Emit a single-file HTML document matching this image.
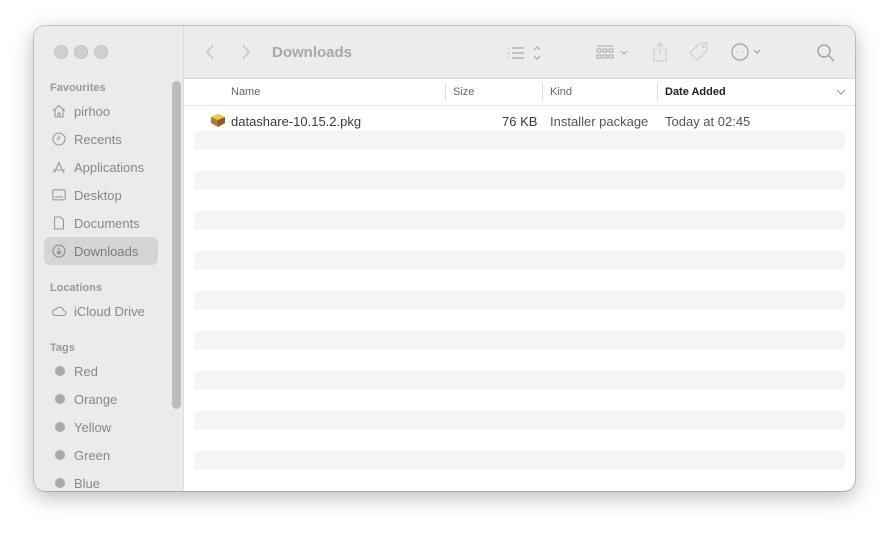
<!DOCTYPE html><html><head><style>
body{margin:0;width:889px;height:533px;background:#fff;font-family:"Liberation Sans",sans-serif;overflow:hidden;position:relative}
.win{position:absolute;left:34px;top:26px;width:821px;height:465px;border-radius:11px;background:#fff;overflow:hidden;box-shadow:0 6px 22px rgba(0,0,0,.28),0 0 0 1px rgba(0,0,0,.18)}
.side{position:absolute;left:0;top:0;width:149px;height:465px;background:#ebebeb;border-right:1px solid #dcdcdc}
.tb{position:absolute;left:150px;top:0;right:0;height:52px;background:#ececec;border-bottom:1px solid #d8d8d8}
.dot{position:absolute;top:19px;width:12px;height:12px;border-radius:50%;background:#cfcfcf;border:0.5px solid #c2c2c2}
.s{position:absolute;left:40px;font-size:13px;color:#888}
.h{position:absolute;left:16px;font-size:11px;font-weight:bold;color:#9a9a9a}
.ic{position:absolute;left:18px;width:14px;height:14px;color:#999}
.tag{position:absolute;left:21px;width:10px;height:10px;border-radius:50%;background:#a9a9a9}
.hd{position:absolute;top:52px;left:150px;right:0;height:27px;border-bottom:1px solid #e3e3e3;font-size:11px;color:#666}
.hd span{position:absolute;top:8px}
.sep{position:absolute;top:4px;width:1px;height:19px;background:#e0e0e0}
.st{position:absolute;left:160px;width:651px;height:19px;border-radius:4px;background:#f4f5f5}
.r{position:absolute;top:88px;font-size:13px;color:#3a3a3a}
</style></head><body><div class="win">
<div class="side">
<div class="dot" style="left:20px"></div><div class="dot" style="left:40px"></div><div class="dot" style="left:60px"></div>
<div style="position:absolute;left:138px;top:55px;width:9px;height:328px;border-radius:5px;background:#bcbcbc"></div>
<div class="h" style="top:56px">Favourites</div>
<div style="position:absolute;left:10px;top:211px;width:114px;height:28px;border-radius:6px;background:#d5d5d5"></div>
<svg class="ic" style="top:78px" viewBox="0 0 14 14" fill="none" stroke="#999" stroke-width="1.1"><path d="M1 7L7 1.5 13 7M3 5.5V13h8V5.5M6 13V9h2v4"/></svg><div class="s" style="top:78px">pirhoo</div>
<svg class="ic" style="top:106px" viewBox="0 0 14 14" fill="none" stroke="#999" stroke-width="1.1"><circle cx="7" cy="7" r="6"/><path d="M7 3.5V7H4.5"/></svg><div class="s" style="top:106px">Recents</div>
<svg class="ic" style="top:134px" viewBox="0 0 14 14" fill="none" stroke="#999" stroke-width="1.1"><path d="M2 13L7.5 2M12 13L6.5 2M1 10h12"/></svg><div class="s" style="top:134px">Applications</div>
<svg class="ic" style="top:162px" viewBox="0 0 14 14" fill="none" stroke="#999" stroke-width="1.1"><rect x="0.8" y="1.8" width="12.4" height="10" rx="1.5"/><path d="M3 9h8"/></svg><div class="s" style="top:162px">Desktop</div>
<svg class="ic" style="top:190px" viewBox="0 0 14 14" fill="none" stroke="#999" stroke-width="1.1"><path d="M2.5 1h6l3 3v9h-9z"/></svg><div class="s" style="top:190px">Documents</div>
<svg class="ic" style="top:218px" viewBox="0 0 14 14" fill="none" stroke="#888" stroke-width="1.1"><circle cx="7" cy="7" r="6"/><path d="M7 3.5v6M4.5 7.5L7 10l2.5-2.5"/></svg><div class="s" style="top:218px;color:#7a7a7a">Downloads</div>
<div class="h" style="top:256px">Locations</div>
<svg class="ic" style="top:278px;width:16px;left:17px" viewBox="0 0 16 14" fill="none" stroke="#999" stroke-width="1.1"><path d="M4 11.5h8.5a2.5 2.5 0 0 0 0-5 4 4 0 0 0-7.5-1A3 3 0 0 0 4 11.5z"/></svg><div class="s" style="top:278px">iCloud Drive</div>
<div class="h" style="top:316px">Tags</div>
<div class="tag" style="top:340px"></div><div class="s" style="top:338px">Red</div>
<div class="tag" style="top:368px"></div><div class="s" style="top:366px">Orange</div>
<div class="tag" style="top:396px"></div><div class="s" style="top:394px">Yellow</div>
<div class="tag" style="top:424px"></div><div class="s" style="top:422px">Green</div>
<div class="tag" style="top:452px"></div><div class="s" style="top:450px">Blue</div>
</div>
<div class="tb">
<svg style="position:absolute;left:20px;top:17px" width="12" height="18" viewBox="0 0 12 18" fill="none" stroke="#c4c4c4" stroke-width="1.5"><path d="M9 2L3 9l6 7"/></svg>
<svg style="position:absolute;left:56px;top:17px" width="12" height="18" viewBox="0 0 12 18" fill="none" stroke="#c4c4c4" stroke-width="1.5"><path d="M3 2l6 7-6 7"/></svg>
<div style="position:absolute;left:88px;top:18px;font-size:15px;font-weight:bold;color:#a8a8a8">Downloads</div>
<svg style="position:absolute;left:322px;top:17px" width="40" height="20" viewBox="0 0 40 20" fill="none" stroke="#a8a8a8" stroke-width="1.2"><path d="M2 5h1M2 10h1M2 15h1M6 5h12M6 10h12M6 15h12M28 7l3-3 3 3M28 13l3 3 3-3"/></svg>
<svg style="position:absolute;left:410px;top:17px" width="40" height="20" viewBox="0 0 40 20" fill="none" stroke="#a8a8a8" stroke-width="1"><path d="M3 3h16"/><rect x="3" y="6" width="4" height="3"/><rect x="9" y="6" width="4" height="3"/><rect x="15" y="6" width="4" height="3"/><rect x="3" y="12" width="4" height="3"/><rect x="9" y="12" width="4" height="3"/><rect x="15" y="12" width="4" height="3"/><path d="M27 8l3 3 3-3"/></svg>
<svg style="position:absolute;left:466px;top:15px" width="20" height="22" viewBox="0 0 20 22" fill="none" stroke="#cdcdcd" stroke-width="1.2"><path d="M7 8H4v12h12V8h-3M10 14V2M6.5 5.5L10 2l3.5 3.5"/></svg>
<svg style="position:absolute;left:504px;top:15px" width="22" height="22" viewBox="0 0 22 22" fill="none" stroke="#cdcdcd" stroke-width="1.2"><path d="M12 2h7v7L9 19l-7-7z"/><circle cx="15.5" cy="5.5" r="1"/></svg>
<svg style="position:absolute;left:546px;top:16px" width="40" height="20" viewBox="0 0 40 20" fill="none" stroke="#a0a0a0" stroke-width="1.2"><circle cx="10" cy="10" r="8"/><path d="M6.5 10h.5M9.8 10h.5M13 10h.5M24 8l3 3 3-3"/></svg>
<svg style="position:absolute;left:632px;top:17px" width="20" height="20" viewBox="0 0 20 20" fill="none" stroke="#a0a0a0" stroke-width="1.4"><circle cx="8" cy="8" r="6"/><path d="M12.5 12.5L18 18"/></svg>
</div>
<div class="hd">
<span style="left:47px">Name</span><div class="sep" style="left:261px"></div>
<span style="left:269px">Size</span><div class="sep" style="left:358px"></div>
<span style="left:366px">Kind</span><div class="sep" style="left:473px"></div>
<span style="left:481px;font-weight:bold;color:#222">Date Added</span>
<svg style="position:absolute;left:652px;top:10px" width="10" height="8" viewBox="0 0 10 8" fill="none" stroke="#999"><path d="M1 2l4 4 4-4"/></svg>
</div>
<svg style="position:absolute;left:176px;top:86px" width="16" height="16" viewBox="0 0 16 16"><path d="M1 5l7-3 7 3-7 3z" fill="#f3c431"/><path d="M1 5v6l7 4V8z" fill="#b07a3c"/><path d="M15 5v6l-7 4V8z" fill="#8a5a2a"/></svg>
<div class="r" style="left:197px">datashare-10.15.2.pkg</div>
<div class="r" style="left:468px">76 KB</div>
<div class="r" style="left:516px;color:#555">Installer package</div>
<div class="r" style="left:631px;color:#555">Today at 02:45</div>
<div class="st" style="top:105px"></div><div class="st" style="top:145px"></div><div class="st" style="top:185px"></div><div class="st" style="top:225px"></div><div class="st" style="top:265px"></div><div class="st" style="top:305px"></div><div class="st" style="top:345px"></div><div class="st" style="top:385px"></div><div class="st" style="top:425px"></div>
</div></body></html>
